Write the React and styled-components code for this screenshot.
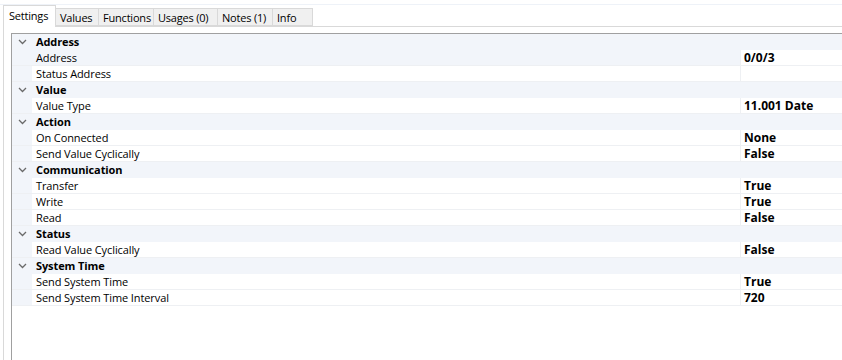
import React from "react";
import styled, { createGlobalStyle } from "styled-components";

const GlobalStyle = createGlobalStyle`
  html, body {
    margin: 0;
    padding: 0;
    background: #ffffff;
  }
  body {
    font-family: "Open Sans", "Noto Sans", "Liberation Sans", Arial, sans-serif;
    font-size: 11px;
    color: #000000;
  }
`;

const Window = styled.div`
  height: 360px;
  overflow: hidden;
  display: flex;
  flex-direction: column;
  margin-top: 4px;
  border-top: 1px solid #eef2f8;
`;

const TabStrip = styled.div`
  display: flex;
  align-items: flex-end;
  height: 21px;
  padding-left: 3px;
  position: relative;
  z-index: 1;
`;

const Tab = styled.div`
  box-sizing: border-box;
  width: ${(p) => p.$width}px;
  height: ${(p) => (p.$active ? 22 : 18)}px;
  margin-bottom: ${(p) => (p.$active ? -1 : 0)}px;
  margin-left: ${(p) => (p.$first ? 0 : -1)}px;
  display: flex;
  align-items: center;
  padding-left: ${(p) => (p.$active ? 5 : 4)}px;
  padding-bottom: ${(p) => (p.$active ? 3 : 0)}px;
  background: ${(p) => (p.$active ? "#ffffff" : "#f0f0f0")};
  border: 1px solid #d9d9d9;
  border-bottom: ${(p) => (p.$active ? "none" : "1px solid #d9d9d9")};
  white-space: nowrap;
  letter-spacing: -0.2px;
  position: relative;
  z-index: ${(p) => (p.$active ? 2 : 1)};
`;

const Panel = styled.div`
  flex: 1;
  margin-left: 3px;
  border-top: 1px solid #d9d9d9;
  border-left: 1px solid #d9d9d9;
  padding: 6px 0 0 7px;
  display: flex;
`;

const Grid = styled.div`
  flex: 1;
  border-top: 1px solid #a0a0a0;
  border-left: 1px solid #a0a0a0;
  display: flex;
  flex-direction: column;
`;

const Row = styled.div`
  display: flex;
  height: 15px;
  border-bottom: 1px solid ${(p) => (p.$category ? "#f2f5fa" : "#eef0f3")};
  background: ${(p) => (p.$category ? "#f2f5fa" : "#ffffff")};
  line-height: 16px;
`;

const Gutter = styled.div`
  width: 20px;
  flex: none;
  background: #f2f5fa;
  display: flex;
  align-items: center;
  justify-content: center;
  padding-top: 1px;
`;

const Label = styled.div`
  width: 708px;
  flex: none;
  box-sizing: border-box;
  padding-left: 4px;
  background: ${(p) => (p.$selected ? "#f2f5fa" : "transparent")};
  font-weight: ${(p) => (p.$category ? "bold" : "normal")};
  letter-spacing: -0.1px;
  white-space: nowrap;
`;

const Value = styled.div`
  flex: 1;
  border-left: 1px solid #eef0f3;
  padding-left: 3px;
  font-size: 12px;
  font-weight: bold;
  white-space: nowrap;
`;

const Chevron = () => (
  <svg width="9" height="6" viewBox="0 0 9 6">
    <polyline points="1,1 4.5,4.5 8,1" fill="none" stroke="#6a6a6a" strokeWidth="1.3" />
  </svg>
);

const tabs = [
  { title: "Settings", width: 53 },
  { title: "Values", width: 44 },
  { title: "Functions", width: 56 },
  { title: "Usages (0)", width: 65 },
  { title: "Notes (1)", width: 56 },
  { title: "Info", width: 41 },
];

const sections = [
  {
    title: "Address",
    props: [
      { name: "Address", value: "0/0/3", selected: true },
      { name: "Status Address", value: "" },
    ],
  },
  { title: "Value", props: [{ name: "Value Type", value: "11.001 Date" }] },
  {
    title: "Action",
    props: [
      { name: "On Connected", value: "None" },
      { name: "Send Value Cyclically", value: "False" },
    ],
  },
  {
    title: "Communication",
    props: [
      { name: "Transfer", value: "True" },
      { name: "Write", value: "True" },
      { name: "Read", value: "False" },
    ],
  },
  { title: "Status", props: [{ name: "Read Value Cyclically", value: "False" }] },
  {
    title: "System Time",
    props: [
      { name: "Send System Time", value: "True" },
      { name: "Send System Time Interval", value: "720" },
    ],
  },
];

export default function App() {
  return (
    <Window>
      <GlobalStyle />
      <TabStrip>
        {tabs.map((t, i) => (
          <Tab key={t.title} $width={t.width} $active={i === 0} $first={i === 0}>
            {t.title}
          </Tab>
        ))}
      </TabStrip>
      <Panel>
        <Grid>
          {sections.map((s) => (
            <React.Fragment key={s.title}>
              <Row $category>
                <Gutter>
                  <Chevron />
                </Gutter>
                <Label $category>{s.title}</Label>
              </Row>
              {s.props.map((p) => (
                <Row key={p.name}>
                  <Gutter />
                  <Label $selected={p.selected}>{p.name}</Label>
                  <Value>{p.value}</Value>
                </Row>
              ))}
            </React.Fragment>
          ))}
        </Grid>
      </Panel>
    </Window>
  );
}
